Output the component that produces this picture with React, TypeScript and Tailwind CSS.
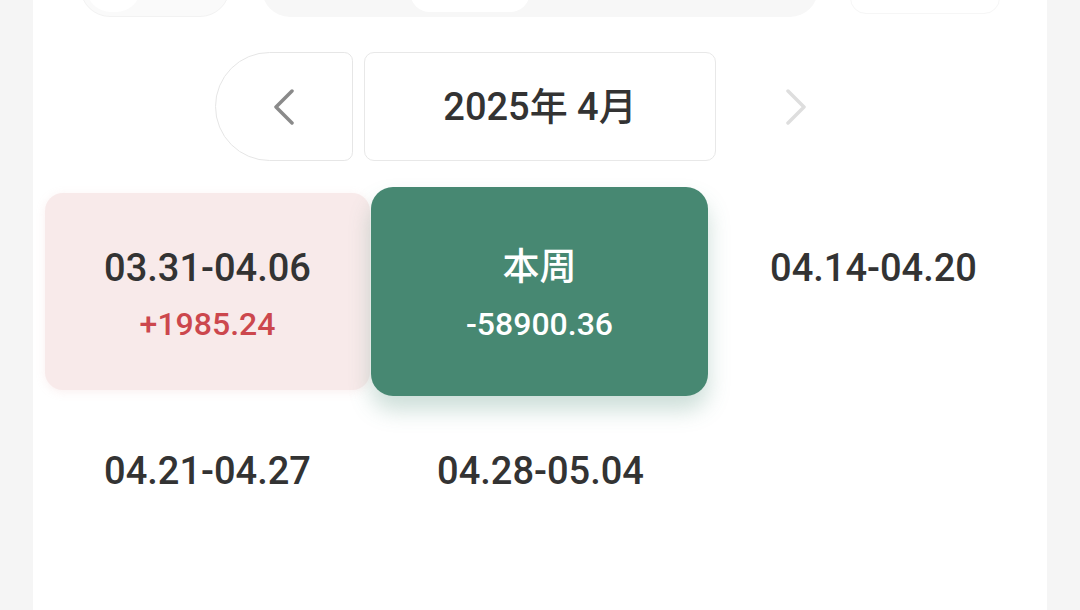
import React from "react";

const font = { fontFamily: 'Roboto, "Noto Sans CJK SC", sans-serif' };

function ChevronLeft({ color }: { color: string }) {
  return (
    <svg width="26" height="36" viewBox="0 0 26 36" fill="none">
      <polyline points="21,2 5,18 21,34" stroke={color} strokeWidth="3.5" strokeLinecap="round" strokeLinejoin="round" fill="none" />
    </svg>
  );
}
function ChevronRight({ color }: { color: string }) {
  return (
    <svg width="26" height="36" viewBox="0 0 26 36" fill="none">
      <polyline points="5,2 21,18 5,34" stroke={color} strokeWidth="3.5" strokeLinecap="round" strokeLinejoin="round" fill="none" />
    </svg>
  );
}

type Week = { label: string; amount?: string; kind: "loss" | "current" | "plain" };

const weeks: Week[] = [
  { label: "03.31-04.06", amount: "+1985.24", kind: "loss" },
  { label: "本周", amount: "-58900.36", kind: "current" },
  { label: "04.14-04.20", kind: "plain" },
  { label: "04.21-04.27", kind: "plain" },
  { label: "04.28-05.04", kind: "plain" },
];

function WeekCell({ w }: { w: Week }) {
  if (w.kind === "current") {
    return (
      <div className="ml-[-3px] mr-[-1px] mt-[-6px] h-[209px] rounded-[22px] bg-[#478872] shadow-[0_14px_22px_rgba(71,136,114,0.28)] flex flex-col items-center pt-[57px]">
        <div className="text-[37px] leading-[48px] font-medium text-white">{w.label}</div>
        <div className="mt-[12px] text-[32px] leading-[40px] font-medium text-white">{w.amount}</div>
      </div>
    );
  }
  if (w.kind === "loss") {
    return (
      <div className="mx-[4px] h-[197px] rounded-[18px] bg-[#f8eaea] shadow-[0_2px_10px_rgba(230,170,170,0.18)] flex flex-col items-center pt-[51px]">
        <div className="text-[38px] leading-[48px] font-medium text-[#333333]">{w.label}</div>
        <div className="mt-[12px] text-[32px] leading-[40px] font-medium text-[#cc474d]">{w.amount}</div>
      </div>
    );
  }
  return (
    <div className="mx-[4px] h-[197px] flex flex-col items-center pt-[51px]">
      <div className="text-[38px] leading-[48px] font-medium text-[#333333]">{w.label}</div>
      <div className="mt-[12px] h-[40px]" />
    </div>
  );
}

export default function App() {
  return (
    <div className="w-[1080px] h-[610px] bg-[#f5f5f5] flex justify-center overflow-hidden" style={font}>
      <div className="w-[1014px] h-[610px] bg-white flex flex-col">
        {/* top faded controls (cut off) */}
        <div className="flex items-end h-[17px] overflow-hidden">
          <div className="ml-[47px] w-[150px] h-[60px] shrink-0 rounded-[40px] bg-[#fafafa] border border-[#f2f2f2] flex items-end pl-[5px] pb-[4px]">
            <div className="w-[55px] h-[50px] rounded-full bg-white" />
          </div>
          <div className="ml-[32px] w-[556px] h-[60px] shrink-0 rounded-[28px] bg-[#f7f7f7] flex items-end pl-[148px] pb-[5px]">
            <div className="w-[120px] h-[50px] rounded-[20px] bg-white" />
          </div>
          <div className="ml-[32px] w-[150px] h-[60px] shrink-0 mb-[3px] rounded-[16px] bg-white border border-[#f6f6f6]" />
        </div>

        {/* month nav */}
        <div className="mt-[35px] flex justify-center gap-[11px] h-[109px]">
          <div className="w-[138px] h-full rounded-l-[56px] rounded-r-[9px] border border-[#e6e6e6] flex items-center justify-center">
            <ChevronLeft color="#8a8a8a" />
          </div>
          <div className="w-[352px] h-full rounded-[10px] border border-[#e8e8e8] flex items-center justify-center">
            <span className="text-[38px] font-medium text-[#333333] leading-none">2025年 4月</span>
          </div>
          <div className="w-[138px] h-full flex items-center justify-center">
            <ChevronRight color="#dedede" />
          </div>
        </div>

        {/* weeks grid */}
        <div className="mt-[32px] px-[8px] grid grid-cols-[333px_333px_333px] gap-y-0">
          {weeks.map((w, i) => (
            <WeekCell key={i} w={w} />
          ))}
        </div>
      </div>
    </div>
  );
}
